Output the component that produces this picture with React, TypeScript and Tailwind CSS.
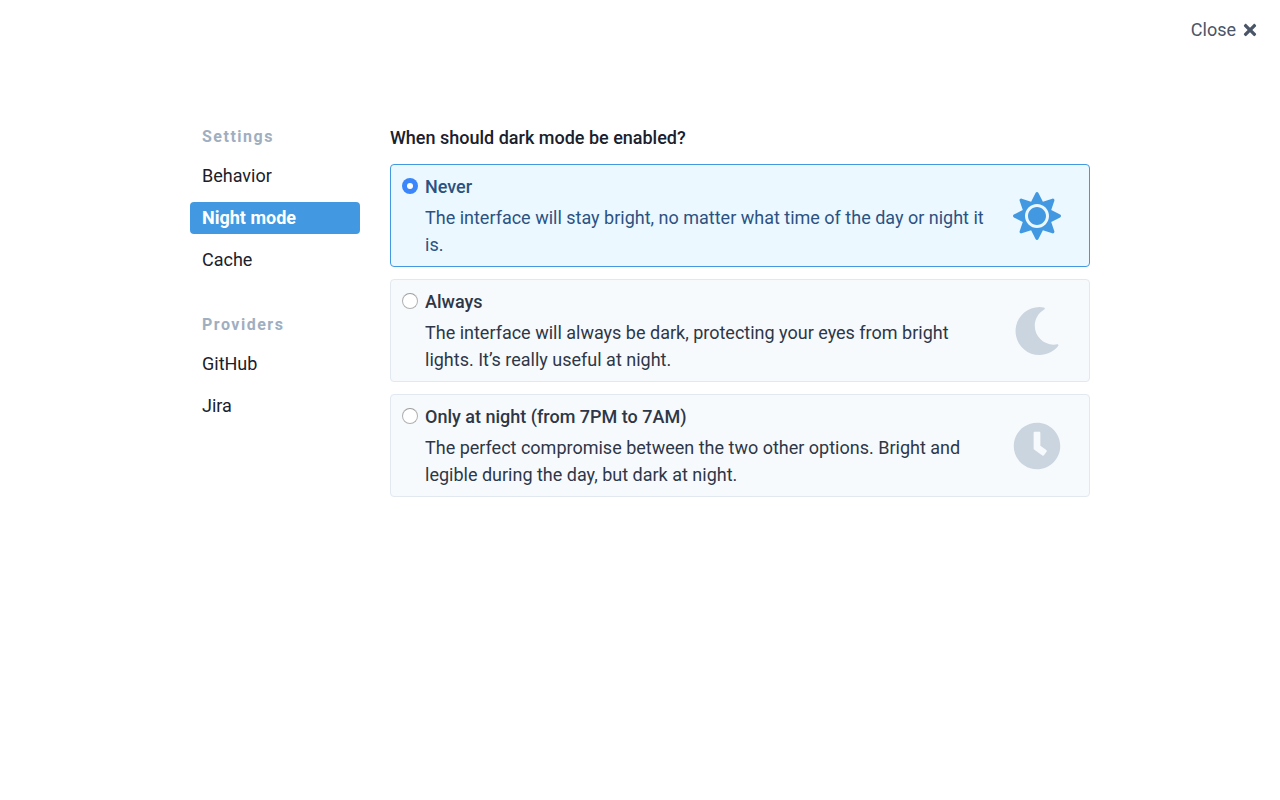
import { FaTimes, FaSun, FaMoon } from "react-icons/fa";
import type { ComponentType } from "react";

const groups = [
  { title: "Settings", items: ["Behavior", "Night mode", "Cache"] },
  { title: "Providers", items: ["GitHub", "Jira"] },
];

function Clock({ className }: { className?: string }) {
  return (
    <svg viewBox="0 0 512 512" className={className} fill="currentColor">
      <path d="M256 8C119 8 8 119 8 256s111 248 248 248 248-111 248-248S393 8 256 8zm57.1 350.1L224.9 294c-3.100-2.300-4.900-5.900-4.900-9.700V116c0-6.600 5.400-12 12-12h48c6.600 0 12 5.400 12 12v137.700l63.500 46.200c5.400 3.900 6.500 11.400 2.600 16.800l-28.200 38.800c-3.900 5.300-11.400 6.500-16.800 2.600z" />
    </svg>
  );
}

interface Choice {
  title: string;
  text: string;
  icon: ComponentType<{ className?: string }>;
}

const choices: Choice[] = [
  { title: "Never", text: "The interface will stay bright, no matter what time of the day or night it is.", icon: FaSun },
  { title: "Always", text: "The interface will always be dark, protecting your eyes from bright lights. It’s really useful at night.", icon: FaMoon },
  { title: "Only at night (from 7PM to 7AM)", text: "The perfect compromise between the two other options. Bright and legible during the day, but dark at night.", icon: Clock },
];

export default function App() {
  return (
    <div className="min-h-screen bg-white font-['Roboto',sans-serif] text-[18px] leading-[27px] text-[#1a202c]">
      <header className="flex h-[60px] items-center justify-end pr-[21px] text-[#4a5568]">
        <button className="flex items-center gap-[5px]">
          <span className="-mt-0.5">Close</span>
          <FaTimes className="size-[18px]" />
        </button>
      </header>
      <div className="mx-auto flex w-[900px] gap-[30px] pt-[64px]">
        <nav className="w-[170px]">
          {groups.map((g) => (
            <section key={g.title} className="mb-[36px]">
              <h2 className="mb-[11px] px-3 text-[16px] leading-[25px] font-bold tracking-[1.5px] text-[#a0aec0]">{g.title}</h2>
              <ul className="flex flex-col gap-[10px]">
                {g.items.map((i) => (
                  <li key={i} className={i === "Night mode" ? "h-8 rounded-[4px] bg-[#4299e1] px-3 leading-8 font-bold text-white" : "h-8 px-3 leading-8"}>{i}</li>
                ))}
              </ul>
            </section>
          ))}
        </nav>
        <main className="w-[700px]">
          <h1 className="mb-[13px] font-medium">When should dark mode be enabled?</h1>
          <div className="flex flex-col gap-3">
            {choices.map(({ title, text, icon: Icon }, n) => (
              <label key={title} className={n === 0 ? "flex h-[103px] rounded border border-[#4299e1] bg-[#ebf8ff] pt-[8px] pl-[11px] text-[#2c5282]" : "flex h-[103px] rounded border border-[#e2e8f0] bg-[#f7fafc] pt-[8px] pl-[11px] text-[#2d3748]"}>
                <span className={n === 0 ? "mt-[5px] flex size-4 shrink-0 items-center justify-center rounded-full bg-[#3b86fb]" : "mt-[5px] size-4 shrink-0 rounded-full border border-[#b0b0b0] border-t-[#9c9c9c] bg-white"}>
                  {n === 0 && <span className="size-[6px] rounded-full bg-white" />}
                </span>
                <span className="ml-[7px] block w-[564px]">
                  <span className="mb-[4px] block font-medium">{title}</span>
                  <span className="block">{text}</span>
                </span>
                <span className={n === 0 ? "ml-6 pt-[19px] text-[#4299e1]" : "ml-6 pt-[19px] text-[#cbd5e0]"}>
                  <Icon className="size-12" />
                </span>
              </label>
            ))}
          </div>
        </main>
      </div>
    </div>
  );
}
